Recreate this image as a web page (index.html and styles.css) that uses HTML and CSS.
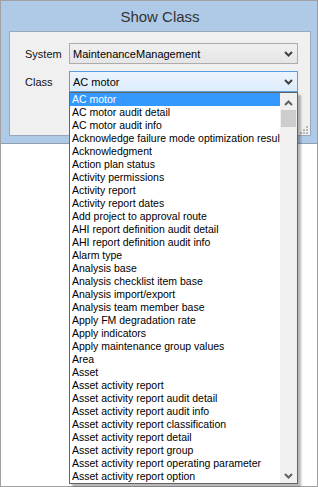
FILE: index.html
```html
<!DOCTYPE html>
<html lang="en">

<head>
  <meta charset="UTF-8">
  <title>Show Class</title>
  <link rel="stylesheet" href="styles.css">
</head>

<body>
  <div class="page">
    <div class="frame">
      <div class="title">Show Class</div>
      <div class="panel">
        <div class="field">
          <label>System</label>
          <div class="combo">
            <span>MaintenanceManagement</span>
            <svg class="chevron" width="9" height="6" viewBox="0 0 9 6"><polyline points="1,1 4.5,4.5 8,1" fill="none" stroke="#404040" stroke-width="2"/></svg>
          </div>
        </div>
        <div class="field">
          <label>Class</label>
          <div class="combo active">
            <span>AC motor</span>
            <svg class="chevron" width="9" height="6" viewBox="0 0 9 6"><polyline points="1,1 4.5,4.5 8,1" fill="none" stroke="#404040" stroke-width="2"/></svg>
          </div>
        </div>
        <svg class="grip" width="8" height="8" viewBox="0 0 8 8" fill="#b8b8b8">
          <rect x="6" y="0" width="2" height="2"/>
          <rect x="3" y="3" width="2" height="2"/><rect x="6" y="3" width="2" height="2"/>
          <rect x="0" y="6" width="2" height="2"/><rect x="3" y="6" width="2" height="2"/><rect x="6" y="6" width="2" height="2"/>
        </svg>
      </div>
    </div>

    <div class="dropdown">
      <ul class="items">
        <li class="selected">AC motor</li>
        <li>AC motor audit detail</li>
        <li>AC motor audit info</li>
        <li>Acknowledge failure mode optimization result</li>
        <li>Acknowledgment</li>
        <li>Action plan status</li>
        <li>Activity permissions</li>
        <li>Activity report</li>
        <li>Activity report dates</li>
        <li>Add project to approval route</li>
        <li>AHI report definition audit detail</li>
        <li>AHI report definition audit info</li>
        <li>Alarm type</li>
        <li>Analysis base</li>
        <li>Analysis checklist item base</li>
        <li>Analysis import/export</li>
        <li>Analysis team member base</li>
        <li>Apply FM degradation rate</li>
        <li>Apply indicators</li>
        <li>Apply maintenance group values</li>
        <li>Area</li>
        <li>Asset</li>
        <li>Asset activity report</li>
        <li>Asset activity report audit detail</li>
        <li>Asset activity report audit info</li>
        <li>Asset activity report classification</li>
        <li>Asset activity report detail</li>
        <li>Asset activity report group</li>
        <li>Asset activity report operating parameter</li>
        <li>Asset activity report option</li>
      </ul>
      <div class="scrollbar">
        <svg class="arrow" width="9" height="6" viewBox="0 0 9 6"><polyline points="1,5 4.5,1.5 8,5" fill="none" stroke="#606060" stroke-width="2"/></svg>
        <div class="thumb"></div>
        <div class="track"></div>
        <svg class="arrow" width="9" height="6" viewBox="0 0 9 6"><polyline points="1,1 4.5,4.5 8,1" fill="none" stroke="#606060" stroke-width="2"/></svg>
      </div>
    </div>
  </div>
</body>

</html>
```

FILE: styles.css
```css
body {
  margin: 0;
  font-family: 'Liberation Sans', Arial, sans-serif;
  background-color: #ffffff;
}

.page {
  position: relative;
  box-sizing: border-box;
  width: 318px;
  height: 487px;
  border: 1px solid #a0a0a0;
  background-color: #ffffff;
}

.frame {
  background-color: #afcae7;
  border-bottom: 1px solid #8e9fb2;
  padding: 0 6px 7px 8px;
}

.title {
  height: 30px;
  line-height: 31px;
  text-align: center;
  font-size: 15px;
  color: #333;
}

.panel {
  position: relative;
  box-sizing: border-box;
  height: 105px;
  background-color: #f0f0f0;
  border: 1px solid #97aabd;
  padding: 11px 12px 0 15px;
}

.field {
  display: flex;
  align-items: center;
  margin-bottom: 7px;
}

.field label {
  width: 44px;
  font-size: 11px;
  color: #111;
}

.combo {
  box-sizing: border-box;
  width: 229px;
  height: 21px;
  border: 1px solid #acacac;
  background: linear-gradient(#f0f0f0, #e5e5e5);
  display: flex;
  align-items: center;
  justify-content: space-between;
  padding: 0 4px 0 3px;
  font-size: 11px;
  color: #000;
}

.combo.active {
  border-color: #5a9fe0;
  background: linear-gradient(#ecf4fc, #dcecfc);
}

.grip {
  position: absolute;
  right: 2px;
  bottom: 1px;
}

.dropdown {
  position: absolute;
  left: 68px;
  top: 91px;
  width: 229px;
  height: 392px;
  box-sizing: border-box;
  border: 1px solid #646464;
  background-color: #ffffff;
  box-shadow: 3px 3px 2px rgba(0, 0, 0, 0.28);
  display: flex;
}

.items {
  list-style: none;
  margin: 0;
  padding: 0;
  flex: 1;
  overflow: hidden;
}

.items li {
  height: 13px;
  line-height: 13px;
  padding-left: 2px;
  font-size: 10.5px;
  white-space: nowrap;
  color: #000;
}

.items li.selected {
  background-color: #3399ff;
  color: #ffffff;
}

.scrollbar {
  width: 17px;
  background-color: #f0f0f0;
  display: flex;
  flex-direction: column;
  align-items: center;
}

.arrow {
  margin: 7px 0 4px;
}

.thumb {
  width: 15px;
  height: 17px;
  background-color: #cdcdcd;
}

.track {
  flex: 1;
}
```
